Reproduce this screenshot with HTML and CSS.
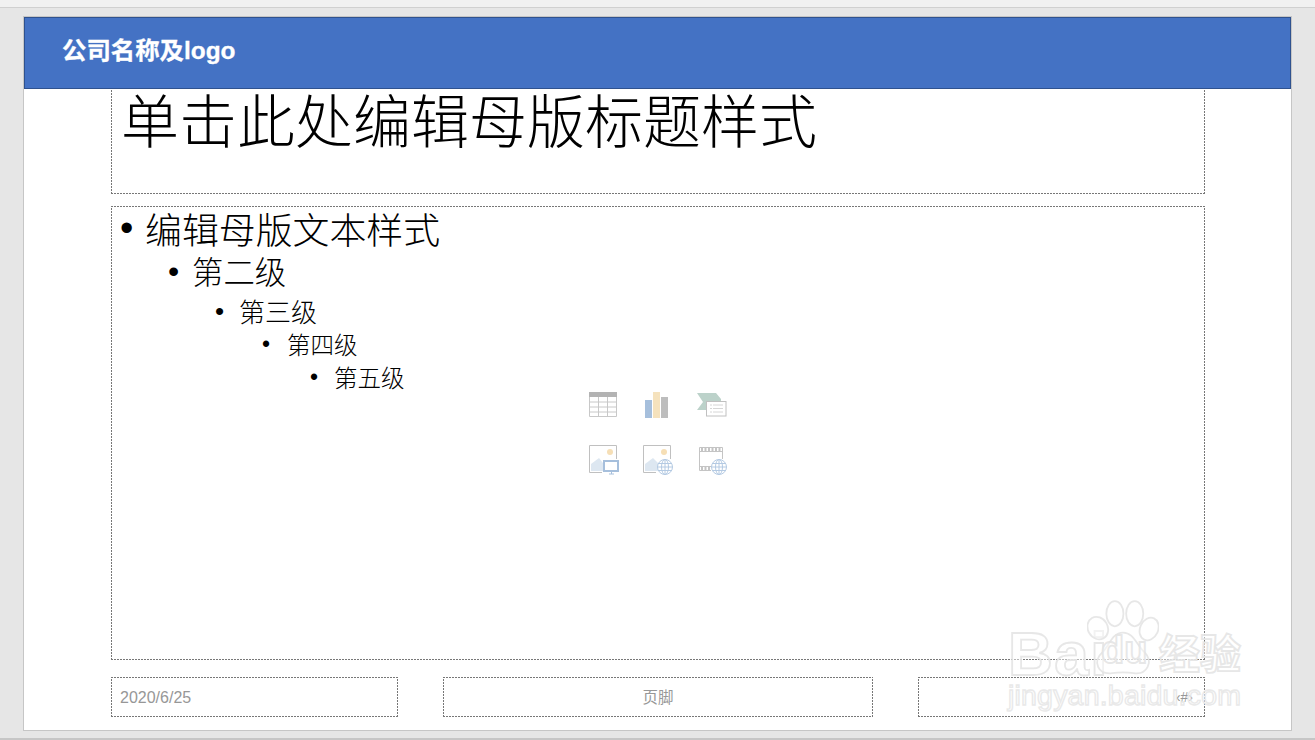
FILE: index.html
```html
<!DOCTYPE html>
<html lang="zh-CN">
<head>
    <meta charset="UTF-8">
    <title>母版视图</title>
    <link rel="stylesheet" href="styles.css">
</head>
<body>
    <div class="top-strip"></div>

    <div class="workspace">
        <div class="slide">
            <!-- Header band -->
            <header class="band">公司名称及logo</header>

            <div class="slide-inner">
                <div class="title-box">单击此处编辑母版标题样式</div>

                <div class="body-box dash-box">
                    <ul class="level level-1"><li>编辑母版文本样式</li></ul>
                    <ul class="level level-2"><li>第二级</li></ul>
                    <ul class="level level-3"><li>第三级</li></ul>
                    <ul class="level level-4"><li>第四级</li></ul>
                    <ul class="level level-5"><li>第五级</li></ul>

                    <!-- Content placeholder icons -->
                    <div class="icon-grid">
                        <svg class="icon" viewBox="0 0 32 32">
                            <rect x="2" y="2" width="28" height="5" fill="#b3b3b3"/>
                            <path d="M2.5 7V26.5H29.5V7M2.5 12H29.5M2.5 17H29.5M2.5 22H29.5M11.5 7V26.5M20.5 7V26.5" fill="none" stroke="#c8c8c8"/>
                        </svg>
                        <svg class="icon" viewBox="0 0 32 32">
                            <rect x="4" y="10" width="7" height="18" fill="#a6bfdc"/>
                            <rect x="12" y="2" width="7" height="26" fill="#f5e2bd"/>
                            <rect x="20" y="7" width="7" height="21" fill="#bdbdbd"/>
                        </svg>
                        <svg class="icon" viewBox="0 0 32 32">
                            <path d="M2 3H21L26 9V20H2L8 12Z" fill="#bcd2ca"/>
                            <rect x="11.5" y="11.5" width="19.5" height="14.5" fill="#fff" stroke="#c0c0c0"/>
                            <path d="M15 15H17M18 15H28M15 18.5H17M18 18.5H28M15 22H17M18 22H28" stroke="#d6d6d6"/>
                        </svg>
                        <svg class="icon" viewBox="0 0 32 32">
                            <path d="M15 28.5H2.5V1.5H29.5V15" fill="none" stroke="#c0c0c0"/>
                            <circle cx="23" cy="8" r="3" fill="#f6dfb6"/>
                            <path d="M4 27V20L12 14L16 19V27Z" fill="#dde7f1"/>
                            <rect x="17" y="17" width="14" height="10" fill="#fff" stroke="#a6bfdc" stroke-width="2"/>
                            <path d="M22 30H27M24.5 28V30" stroke="#a6bfdc"/>
                        </svg>
                        <svg class="icon" viewBox="0 0 32 32">
                            <path d="M15 28.5H2.5V1.5H29.5V15" fill="none" stroke="#c0c0c0"/>
                            <circle cx="23" cy="8" r="3" fill="#f6dfb6"/>
                            <path d="M4 27V20L12 14L17 19V27Z" fill="#dde7f1"/>
                            <use href="#globe"/>
                        </svg>
                        <svg class="icon" viewBox="0 0 32 32">
                            <path d="M16 26.5H4.5V3.5H27.5V15" fill="none" stroke="#c4c4c4"/>
                            <path d="M5 7.5H27M5 22.5H16" stroke="#c4c4c4"/>
                            <path d="M6 5.5H26M6 24.5H15" stroke="#c4c4c4" stroke-width="3" stroke-dasharray="2 1.5"/>
                            <use href="#globe"/>
                        </svg>
                    </div>
                </div>

                <div class="footer-row">
                    <div class="foot-box foot-date dash-box">2020/6/25</div>
                    <div class="foot-box foot-mid dash-box">页脚</div>
                    <div class="foot-box foot-num dash-box">‹#›</div>
                </div>
            </div>
        </div>
    </div>

    <div class="bottom-strip"></div>

    <svg class="defs" width="0" height="0">
        <symbol id="globe" viewBox="0 0 32 32">
            <circle cx="24" cy="23" r="7.5" fill="#fff" stroke="#b4cae3"/>
            <ellipse cx="24" cy="23" rx="3.5" ry="7.5" fill="none" stroke="#b4cae3"/>
            <path d="M24 15.5V30.5M16.5 23H31.5M17.5 19.5H30.5M17.5 26.5H30.5" stroke="#b4cae3" fill="none"/>
        </symbol>
    </svg>

    <!-- Baidu watermark -->
    <div class="watermark">
        <span class="wm-bai">Bai</span>
        <svg class="wm-paw" viewBox="0 0 80 84">
            <ellipse cx="12" cy="31" rx="11" ry="13" transform="rotate(-30 12 31)"/>
            <ellipse cx="31" cy="15" rx="9.5" ry="14"/>
            <ellipse cx="53" cy="15" rx="9.5" ry="14"/>
            <ellipse cx="69" cy="32" rx="10" ry="13" transform="rotate(25 69 32)"/>
            <path d="M40 36C52 36 55 50 64 58C74 68 67 83 52 81C45 80 35 80 28 81C12 83 6 68 17 58C25 50 28 36 40 36Z"/>
        </svg>
        <span class="wm-du">du</span>
        <span class="wm-cn">经验</span>
        <span class="wm-url">jingyan.baidu.com</span>
    </div>
</body>
</html>
```

FILE: styles.css
```css
/* Base */
* {
    margin: 0;
    padding: 0;
    box-sizing: border-box;
}

html, body {
    height: 740px;
    overflow: hidden;
}

body {
    background-color: #e6e6e6;
    font-family: "Liberation Sans", "Noto Sans CJK SC", sans-serif;
    color: #000;
    display: flex;
    flex-direction: column;
}

.top-strip {
    height: 8px;
    background-color: #f1f1f1;
    border-bottom: 1px solid #d0d0d0;
}

.bottom-strip {
    height: 2px;
    background-color: #c6c6c6;
}

.workspace {
    flex: 1;
    padding: 8px 23px 7px;
}

/* Fine dashes, finer than a 1px dashed border draws */
.dash-box {
    background-image:
        repeating-linear-gradient(90deg, #777 0 2px, transparent 2px 3px),
        repeating-linear-gradient(90deg, #777 0 2px, transparent 2px 3px),
        repeating-linear-gradient(0deg, #777 0 2px, transparent 2px 3px),
        repeating-linear-gradient(0deg, #777 0 2px, transparent 2px 3px);
    background-size: 100% 1px, 100% 1px, 1px 100%, 1px 100%;
    background-position: 0 0, 0 100%, 0 0, 100% 0;
    background-repeat: no-repeat;
}

/* Slide */
.slide {
    height: 715px;
    width: 1269px;
    background-color: #fff;
    border: 1px solid #c6c6c6;
    display: flex;
    flex-direction: column;
}

.band {
    height: 72px;
    background-color: #4472c4;
    border: 1px solid #2f528f;
    color: #fff;
    font-size: 24.4px;
    font-weight: bold;
    line-height: 66px;
    padding-left: 37px;
    -webkit-text-stroke: 0.3px #fff;
}

.slide-inner {
    padding: 0 86px 0 87px;
}

.title-box {
    height: 105px;
    font-family: "Noto Sans CJK SC", sans-serif;
    font-weight: 300;
    font-size: 58px;
    line-height: 58px;
    padding-left: 10px;
    background-image:
        repeating-linear-gradient(90deg, #777 0 2px, transparent 2px 3px),
        repeating-linear-gradient(0deg, #777 0 2px, transparent 2px 3px),
        repeating-linear-gradient(0deg, #777 0 2px, transparent 2px 3px);
    background-size: 100% 1px, 1px 100%, 1px 100%;
    background-position: 0 100%, 0 0, 100% 0;
    background-repeat: no-repeat;
}

.body-box {
    position: relative;
    height: 454px;
    margin-top: 12px;
    padding-top: 1px;
    font-family: "Noto Sans CJK SC", sans-serif;
    font-weight: 300;
}

/* Bullet levels */
.level {
    list-style: none;
}

.level li {
    position: relative;
}

.level li::before {
    content: "•";
    position: absolute;
    font-family: "Liberation Sans", sans-serif;
}

.level-1 {
    padding-left: 34px;
    font-size: 36.9px;
    line-height: 42px;
}

.level-1 li::before {
    left: -25px;
    font-size: 38px;
}

.level-2 {
    padding-left: 81px;
    font-size: 31.4px;
    line-height: 40px;
    margin-top: 2px;
}

.level-2 li::before {
    left: -24px;
    font-size: 32px;
}

.level-3 {
    padding-left: 128px;
    font-size: 26px;
    line-height: 36px;
    margin-top: 2px;
}

.level-3 li::before {
    left: -24px;
    font-size: 26px;
}

.level-4 {
    padding-left: 176px;
    font-size: 23.5px;
    line-height: 32px;
    margin-top: -1px;
}

.level-4 li::before {
    left: -25px;
    font-size: 23px;
}

.level-5 {
    padding-left: 223px;
    font-size: 23.5px;
    line-height: 32px;
    margin-top: 1px;
}

.level-5 li::before {
    left: -24px;
    font-size: 23px;
}

/* Placeholder icons */
.icon-grid {
    position: absolute;
    left: 476px;
    top: 184px;
    display: grid;
    grid-template-columns: repeat(3, 32px);
    grid-auto-rows: 32px;
    gap: 22px;
}

.icon {
    width: 32px;
    height: 32px;
    display: block;
    overflow: visible;
}

.defs {
    position: absolute;
}

/* Footer placeholders */
.footer-row {
    display: flex;
    justify-content: space-between;
    margin-top: 17px;
}

.foot-box {
    height: 40px;
    color: #979797;
    font-size: 16px;
    line-height: 41px;
}

.foot-date {
    width: 287px;
    padding-left: 9px;
}

.foot-mid {
    width: 430px;
    text-align: center;
    font-size: 15.5px;
}

.foot-num {
    width: 287px;
    text-align: right;
    padding-right: 12px;
    font-size: 14px;
}

/* Watermark sits over the slide */
.watermark {
    position: absolute;
    left: 1000px;
    top: 595px;
    width: 250px;
    height: 125px;
    color: rgba(255, 255, 255, 0.45);
    -webkit-text-stroke: 1.8px rgba(228, 228, 228, 0.9);
}

.watermark span {
    position: absolute;
    white-space: nowrap;
    font-weight: bold;
}

.wm-bai {
    left: 8px;
    top: 28px;
    font-size: 62px;
    line-height: 62px;
    letter-spacing: 1.5px;
}

.wm-paw {
    position: absolute;
    left: 87px;
    top: 5px;
    width: 72px;
    height: 76px;
    fill: rgba(255, 255, 255, 0.45);
    stroke: rgba(228, 228, 228, 0.9);
    stroke-width: 2;
}

.wm-du {
    left: 101px;
    top: 37px;
    font-size: 38px;
    line-height: 36px;
}

.wm-cn {
    left: 159px;
    top: 33px;
    font-size: 41px;
    line-height: 46px;
    font-family: "Noto Sans CJK SC", sans-serif;
}

.watermark .wm-url {
    left: 8px;
    top: 84px;
    font-size: 28.5px;
    line-height: 32px;
    letter-spacing: 0.2px;
    font-weight: normal;
    -webkit-text-stroke: 1.4px rgba(230, 230, 230, 0.9);
}
```
